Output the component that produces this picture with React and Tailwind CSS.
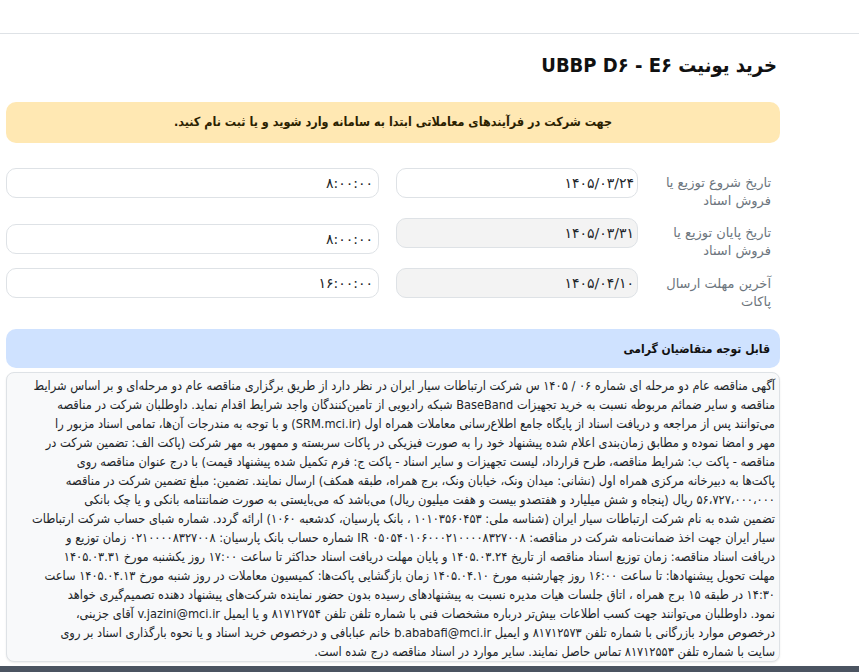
import React from "react";

const lines = [
  "آگهی مناقصه عام دو مرحله ای شماره ۰۶ / ۱۴۰۵ س شرکت ارتباطات سیار ایران در نظر دارد از طریق برگزاری مناقصه عام دو مرحله‌ای و بر اساس شرایط",
  "مناقصه و سایر ضمائم مربوطه نسبت به خرید تجهیزات BaseBand شبکه رادیویی از تامین‌کنندگان واجد شرایط اقدام نماید. داوطلبان شرکت در مناقصه",
  "می‌توانند پس از مراجعه و دریافت اسناد از پایگاه جامع اطلاع‌رسانی معاملات همراه اول (SRM.mci.ir) و با توجه به مندرجات آن‌ها، تمامی اسناد مزبور را",
  "مهر و امضا نموده و مطابق زمان‌بندی اعلام شده پیشنهاد خود را به صورت فیزیکی در پاکات سربسته و ممهور به مهر شرکت (پاکت الف: تضمین شرکت در",
  "مناقصه - پاکت ب: شرایط مناقصه، طرح قرارداد، لیست تجهیزات و سایر اسناد - پاکت ج: فرم تکمیل شده پیشنهاد قیمت) با درج عنوان مناقصه روی",
  "پاکت‌ها به دبیرخانه مرکزی همراه اول (نشانی: میدان ونک، خیابان ونک، برج همراه، طبقه همکف) ارسال نمایند. تضمین: مبلغ تضمین شرکت در مناقصه",
  "۵۶،۷۲۷،۰۰۰،۰۰۰ ریال (پنجاه و شش میلیارد و هفتصدو بیست و هفت میلیون ریال) می‌باشد که می‌بایستی به صورت ضمانتنامه بانکی و یا چک بانکی",
  "تضمین شده به نام شرکت ارتباطات سیار ایران (شناسه ملی: ۱۰۱۰۳۵۶۰۴۵۳ ، بانک پارسیان، کدشعبه ۱۰۶۰) ارائه گردد. شماره شبای حساب شرکت ارتباطات",
  "سیار ایران جهت اخذ ضمانت‌نامه شرکت در مناقصه: IR ۰۵۰۵۴۰۱۰۶۰۰۰۲۱۰۰۰۰۸۳۲۷۰۰۸ شماره حساب بانک پارسیان: ۰۲۱۰۰۰۰۸۳۲۷۰۰۸ زمان توزیع و",
  "دریافت اسناد مناقصه: زمان توزیع اسناد مناقصه از تاریخ ۱۴۰۵.۰۳.۲۴ و پایان مهلت دریافت اسناد حداکثر تا ساعت ۱۷:۰۰ روز یکشنبه مورخ ۱۴۰۵.۰۳.۳۱",
  "مهلت تحویل پیشنهادها: تا ساعت ۱۶:۰۰ روز چهارشنبه مورخ ۱۴۰۵.۰۴.۱۰ زمان بازگشایی پاکت‌ها: کمیسیون معاملات در روز شنبه مورخ ۱۴۰۵.۰۴.۱۳ ساعت",
  "۱۴:۳۰ در طبقه ۱۵ برج همراه ، اتاق جلسات هیات مدیره نسبت به پیشنهادهای رسیده بدون حضور نماینده شرکت‌های پیشنهاد دهنده تصمیم‌گیری خواهد",
  "نمود. داوطلبان می‌توانند جهت کسب اطلاعات بیش‌تر درباره مشخصات فنی با شماره تلفن تلفن ۸۱۷۱۲۷۵۴ و یا ایمیل v.jazini@mci.ir آقای جزینی،",
  "درخصوص موارد بازرگانی با شماره تلفن ۸۱۷۱۲۵۷۳ و ایمیل b.ababafi@mci.ir خانم عبابافی و درخصوص خرید اسناد و یا نحوه بارگذاری اسناد بر روی",
  "سایت با شماره تلفن ۸۱۷۱۲۵۵۳ تماس حاصل نمایند. سایر موارد در اسناد مناقصه درج شده است.",
];

const rows = [
  { l1: "تاریخ شروع توزیع یا", l2: "فروش اسناد", date: "۱۴۰۵/۰۳/۲۴", time: "۸:۰۰:۰۰", disabled: false, dateMt: "mt-0", timeMt: "mt-0", labelMt: "mt-[6px]" },
  { l1: "تاریخ پایان توزیع یا", l2: "فروش اسناد", date: "۱۴۰۵/۰۳/۳۱", time: "۸:۰۰:۰۰", disabled: true, dateMt: "mt-0", timeMt: "mt-[6px]", labelMt: "mt-[6px]" },
  { l1: "آخرین مهلت ارسال", l2: "پاکات", date: "۱۴۰۵/۰۴/۱۰", time: "۱۶:۰۰:۰۰", disabled: true, dateMt: "mt-0", timeMt: "mt-0", labelMt: "mt-[7px]" },
];

const condensed = { fontFamily: '"DejaVu Sans Condensed", "DejaVu Sans", sans-serif' };

export default function App() {
  return (
    <div className="min-h-screen bg-white text-[#212529]" style={{ fontFamily: '"DejaVu Sans", sans-serif' }}>
      <div className="h-[34px] border-b border-[#dee2e6] bg-white" />
      <div dir="rtl" className="mr-[79px] ml-[6px] w-[774px]">
        <h1 className="mt-[16px] h-[30px] pr-[3px] text-[20px] font-bold leading-[30px] text-[#111]" style={condensed}>
          خرید یونیت UBBP D۶ - E۶
        </h1>
        <div className="mt-[22px] flex h-[41px] items-center justify-center rounded-[10px] bg-[#ffe8b3] text-[12.5px] font-bold text-[#2b2100]" style={condensed}>
          جهت شرکت در فرآیندهای معاملاتی ابتدا به سامانه وارد شوید و یا ثبت نام کنید.
        </div>
        <div className="mt-[25px] flex flex-col">
          {rows.map((r, i) => (
            <div key={i} className="flex h-[50px] items-start">
              <div className={`w-[142px] shrink-0 pr-[9px] text-[13px] leading-[18px] text-[#6c757d] ${r.labelMt}`}>
                {r.l1}
                <br />
                {r.l2}
              </div>
              <input
                readOnly
                dir="rtl"
                value={r.date}
                className={`h-[30px] w-[242px] shrink-0 rounded-[10px] border border-[#dee2e6] px-[3px] text-[14px] text-[#212529] outline-none ${r.disabled ? "bg-[#f3f3f3]" : "bg-white"} ${r.dateMt}`}
              />
              <input
                readOnly
                dir="rtl"
                value={r.time}
                className={`mr-[17px] h-[30px] w-[373px] shrink-0 rounded-[10px] border border-[#dee2e6] bg-white px-[5px] text-[14px] text-[#212529] outline-none ${r.timeMt}`}
              />
            </div>
          ))}
        </div>
        <div className="mt-[11px] flex h-[39px] items-center rounded-[10px] bg-[#cfe2ff] pr-[10px] text-[12px] font-bold text-[#111]" style={condensed}>
          قابل توجه متقاضیان گرامی
        </div>
        <div className="mt-[4px] h-[290px] overflow-hidden rounded-[8px] border border-[#dee2e6] bg-[#f8f9fa] px-[4px] pt-[3px] text-[12.7px] leading-[19px] text-[#212529] shadow-[0_1px_2px_rgba(0,0,0,0.08)]" style={condensed}>
          {lines.map((t, i) => (
            <div key={i} className="whitespace-nowrap">{t}</div>
          ))}
        </div>
      </div>
      <div className="mt-[4px] h-[40px] bg-[#4b5461]" />
    </div>
  );
}
